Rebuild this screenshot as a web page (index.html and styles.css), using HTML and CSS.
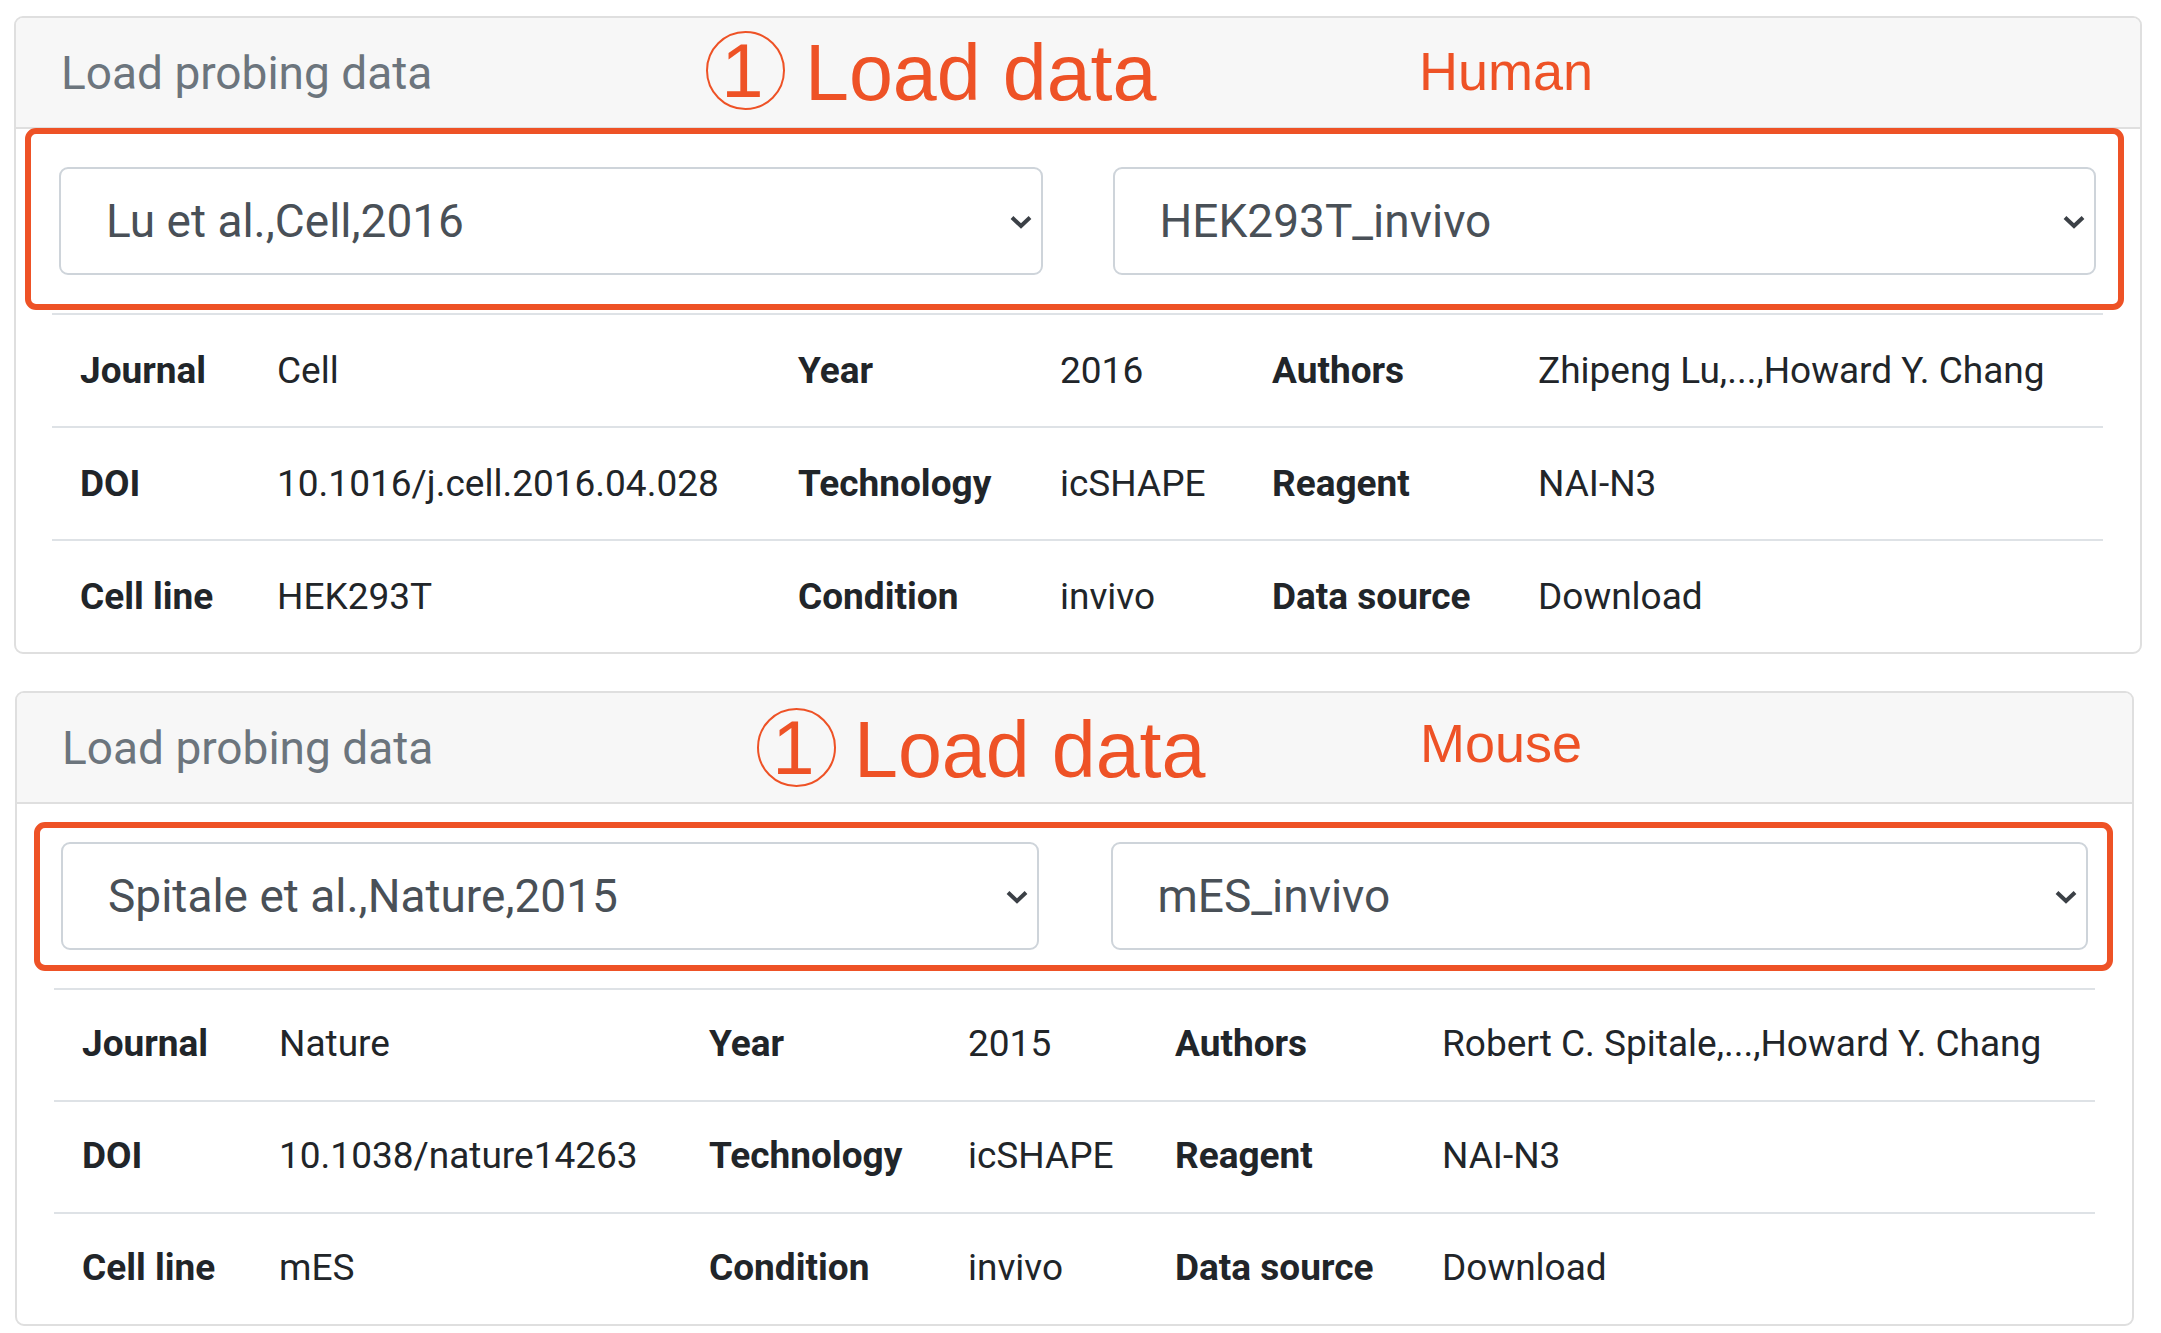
FILE: index.html
```html
<!DOCTYPE html>
<html lang="en">
<head>
<meta charset="utf-8">
<title>Load probing data</title>
<link rel="stylesheet" href="styles.css">
</head>
<body>
<div class="page">
  <section class="card card-human">
    <div class="card-header">Load probing data</div>
    <div class="card-body">
      <div class="select-row">
        <div class="select"><span>Lu et al.,Cell,2016</span><svg class="chev" viewBox="0 0 22 14" width="22" height="14"><path d="M2 2.5 L11 11 L20 2.5" fill="none" stroke="#3b4046" stroke-width="4"/></svg></div>
        <div class="select"><span>HEK293T_invivo</span><svg class="chev" viewBox="0 0 22 14" width="22" height="14"><path d="M2 2.5 L11 11 L20 2.5" fill="none" stroke="#3b4046" stroke-width="4"/></svg></div>
      </div>
      <div class="info info-human">
        <div class="k">Journal</div><div class="v">Cell</div>
        <div class="k">Year</div><div class="v">2016</div>
        <div class="k">Authors</div><div class="v">Zhipeng Lu,...,Howard Y. Chang</div>
        <div class="k">DOI</div><div class="v">10.1016/j.cell.2016.04.028</div>
        <div class="k">Technology</div><div class="v">icSHAPE</div>
        <div class="k">Reagent</div><div class="v">NAI-N3</div>
        <div class="k">Cell line</div><div class="v">HEK293T</div>
        <div class="k">Condition</div><div class="v">invivo</div>
        <div class="k">Data source</div><div class="v">Download</div>
      </div>
    </div>
    <div class="anno-box"></div>
    <span class="anno-circle">1</span>
    <span class="anno-title">Load data</span>
    <span class="anno-species">Human</span>
  </section>

  <section class="card card-mouse">
    <div class="card-header">Load probing data</div>
    <div class="card-body">
      <div class="select-row">
        <div class="select"><span>Spitale et al.,Nature,2015</span><svg class="chev" viewBox="0 0 22 14" width="22" height="14"><path d="M2 2.5 L11 11 L20 2.5" fill="none" stroke="#3b4046" stroke-width="4"/></svg></div>
        <div class="select"><span>mES_invivo</span><svg class="chev" viewBox="0 0 22 14" width="22" height="14"><path d="M2 2.5 L11 11 L20 2.5" fill="none" stroke="#3b4046" stroke-width="4"/></svg></div>
      </div>
      <div class="info info-mouse">
        <div class="k">Journal</div><div class="v">Nature</div>
        <div class="k">Year</div><div class="v">2015</div>
        <div class="k">Authors</div><div class="v">Robert C. Spitale,...,Howard Y. Chang</div>
        <div class="k">DOI</div><div class="v">10.1038/nature14263</div>
        <div class="k">Technology</div><div class="v">icSHAPE</div>
        <div class="k">Reagent</div><div class="v">NAI-N3</div>
        <div class="k">Cell line</div><div class="v">mES</div>
        <div class="k">Condition</div><div class="v">invivo</div>
        <div class="k">Data source</div><div class="v">Download</div>
      </div>
    </div>
    <div class="anno-box"></div>
    <span class="anno-circle">1</span>
    <span class="anno-title">Load data</span>
    <span class="anno-species">Mouse</span>
  </section>
</div>
</body>
</html>
```

FILE: styles.css
```css
* { box-sizing: border-box; }

body {
  margin: 0;
  background: #ffffff;
  font-family: Roboto, "Liberation Sans", Arial, sans-serif;
  color: #212529;
}

.page {
  display: flex;
  flex-direction: column;
  align-items: flex-start;
  padding-top: 16px;
}

.card {
  position: relative;
  background: #ffffff;
  border: 2px solid #dfdfdf;
  border-radius: 9px;
}

.card-human {
  margin-left: 14px;
  width: 2128px;
}

.card-mouse {
  margin-left: 15px;
  width: 2119px;
  margin-top: 37px;
}

.card-header {
  height: 111px;
  display: flex;
  align-items: center;
  padding-left: 45px;
  background: #f7f7f7;
  border-bottom: 2px solid #dfdfdf;
  border-radius: 7px 7px 0 0;
  font-size: 46px;
  color: #6c757d;
}

.card-body {
  padding: 38px 37px 0 36px;
}

.card-mouse .card-body {
  padding: 38px 37px 0 37px;
}

.select-row {
  display: grid;
  grid-template-columns: 1fr 1fr;
  column-gap: 70px;
  padding: 0 7px;
  margin-bottom: 38px;
}

.card-mouse .select-row {
  column-gap: 72px;
}

.select {
  height: 108px;
  display: flex;
  align-items: center;
  justify-content: space-between;
  padding: 0 9px 0 45px;
  border: 2px solid #ced4da;
  border-radius: 9px;
  background: #ffffff;
  font-size: 46px;
  color: #495057;
  white-space: nowrap;
}

.chev {
  flex: none;
  margin-top: 2px;
}

.info {
  display: grid;
}

.info-human {
  grid-template-columns: 197px 521px 262px 212px 266px 1fr;
}

.info-mouse {
  grid-template-columns: 197px 430px 259px 207px 267px 1fr;
}

.info > div {
  height: 113px;
  display: flex;
  align-items: center;
  padding-left: 28px;
  border-top: 2px solid #dee2e6;
  font-size: 37px;
  white-space: nowrap;
}

.info-mouse > div {
  height: 112px;
  padding-bottom: 4px;
}

.info .k {
  font-weight: 700;
}

.info .v {
  font-weight: 400;
}

/* Annotation overlays */
.anno-box {
  position: absolute;
  border: 6px solid #ee5226;
  border-radius: 11px;
  pointer-events: none;
}

.card-human .anno-box {
  left: 9px;
  top: 110px;
  width: 2099px;
  height: 182px;
}

.card-mouse .anno-box {
  left: 17px;
  top: 129px;
  width: 2079px;
  height: 149px;
}

.anno-circle {
  position: absolute;
  width: 79px;
  height: 79px;
  display: flex;
  align-items: center;
  justify-content: center;
  border: 2.5px solid #ee5226;
  border-radius: 50%;
  font-family: "Liberation Sans", Arial, sans-serif;
  font-size: 76px;
  line-height: 1;
  color: #ee5226;
  padding-right: 6px;
}

.anno-title,
.anno-species {
  position: absolute;
  font-family: "Liberation Sans", Arial, sans-serif;
  line-height: 1;
  color: #ee5226;
  white-space: nowrap;
}

.anno-title {
  font-size: 79px;
}

.anno-species {
  font-size: 54px;
}

.card-human .anno-circle { left: 690px; top: 13px; }
.card-human .anno-title { left: 789px; top: 15px; }
.card-human .anno-species { left: 1403px; top: 26px; }

.card-mouse .anno-circle { left: 740px; top: 15px; }
.card-mouse .anno-title { left: 837px; top: 17px; }
.card-mouse .anno-species { left: 1403px; top: 23px; }
```
